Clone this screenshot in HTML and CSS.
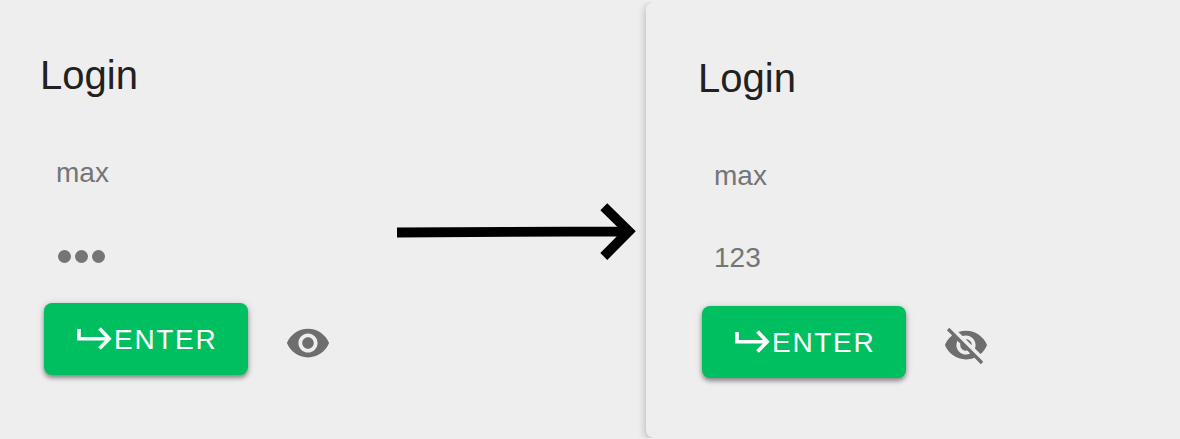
FILE: index.html
```html
<!DOCTYPE html>
<html lang="en">
<head>
<meta charset="utf-8">
<title>Login</title>
<link rel="stylesheet" href="styles.css">
</head>
<body>
<main class="stage">
  <section class="panel">
    <h1 class="title">Login</h1>
    <div class="field">max</div>
    <div class="field password"><i class="dot"></i><i class="dot"></i><i class="dot"></i></div>
    <div class="actions">
      <button class="enter" type="button">
        <svg class="enter-icon" viewBox="0 0 36 24" width="36" height="24"><path d="M2 2v9.700H32M22.500 1.500l9.700 10.200-9.700 9.800"/></svg><span class="label">ENTER</span>
      </button>
      <svg class="eye" viewBox="0 0 24 24"><path d="M12 4.500C7 4.500 2.730 7.610 1 12c1.730 4.390 6 7.500 11 7.500s9.270-3.110 11-7.500c-1.730-4.390-6-7.500-11-7.500zM12 17c-2.760 0-5-2.240-5-5s2.240-5 5-5 5 2.240 5 5-2.240 5-5 5zm0-8c-1.660 0-3 1.340-3 3s1.340 3 3 3 3-1.340 3-3-1.340-3-3-3z"/></svg>
    </div>
  </section>
  <svg class="arrow" viewBox="0 0 240 60" width="240" height="60"><path d="M0 30.500L232 29.300M206.800 4.700L231.800 29.300L206.800 54.500"/></svg>
  <section class="panel card">
    <h1 class="title">Login</h1>
    <div class="field">max</div>
    <div class="field">123</div>
    <div class="actions">
      <button class="enter" type="button">
        <svg class="enter-icon" viewBox="0 0 36 24" width="36" height="24"><path d="M2 2v9.700H32M22.500 1.500l9.700 10.200-9.700 9.800"/></svg><span class="label">ENTER</span>
      </button>
      <svg class="eye eye-off" viewBox="0 0 24 24"><path d="M12 7c2.760 0 5 2.240 5 5 0 .65-.13 1.260-.36 1.830l2.920 2.920c1.510-1.260 2.700-2.890 3.430-4.750-1.730-4.390-6-7.500-11-7.500-1.400 0-2.740.25-3.980.7l2.160 2.160C10.740 7.130 11.350 7 12 7zM2 4.270l2.280 2.280.46.46C3.080 8.300 1.780 10.020 1 12c1.730 4.390 6 7.500 11 7.500 1.550 0 3.030-.3 4.380-.84l.42.42L19.730 22 21 20.730 3.270 3 2 4.270zM7.530 9.800l1.550 1.550c-.05.21-.08.43-.08.65 0 1.660 1.340 3 3 3 .22 0 .44-.03.65-.08l1.550 1.550c-.67.33-1.410.53-2.200.53-2.760 0-5-2.240-5-5 0-.79.2-1.530.53-2.200zm4.310-.78l3.150 3.150.02-.16c0-1.660-1.340-3-3-3l-.17.01z"/></svg>
    </div>
  </section>
</main>
</body>
</html>
```
FILE: styles.css
```css
* { box-sizing: border-box; }

body {
  margin: 0;
  background: #eee;
  font-family: "Liberation Sans", Arial, sans-serif;
}

.stage {
  display: flex;
  width: 1180px;
  height: 439px;
  overflow: hidden;
}

.panel {
  flex: none;
  width: 397px;
  padding: 52px 0 0 40px;
}

.card {
  width: 560px;
  height: 436px;
  margin: 2px 0 0 9px;
  padding: 53px 0 0 52px;
  border-radius: 8px;
  background: #eee;
  box-shadow: 0 2px 8px rgba(0, 0, 0, .28);
  clip-path: inset(0 0 0 -10px);
}

.title {
  margin: 0;
  height: 46px;
  font-size: 40px;
  font-weight: 400;
  line-height: 46px;
  color: #212121;
}

.field {
  height: 32px;
  margin-top: 59px;
  padding-left: 16px;
  font-size: 28px;
  line-height: 32px;
  color: #757575;
}

.field + .field { margin-top: 50px; }

.password {
  display: flex;
  align-items: center;
  gap: 4px;
  padding: 2px 0 0 18px;
}

.dot {
  width: 13px;
  height: 13px;
  border-radius: 50%;
  background: #757575;
}

.actions {
  display: flex;
  margin: 32px 0 0 4px;
}

.enter {
  display: flex;
  align-items: center;
  width: 204px;
  height: 72px;
  padding: 0 0 0 33px;
  border: 0;
  border-radius: 8px;
  background: #00bf60;
  box-shadow: 0 3px 4px rgba(0, 0, 0, .36), 0 1px 8px rgba(0, 0, 0, .14);
  color: #fff;
  font: 28px/32px "Liberation Sans", Arial, sans-serif;
  letter-spacing: 1.7px;
}

.label { padding-top: 1px; }

.enter-icon {
  flex: none;
  margin-right: 1px;
  fill: none;
  stroke: #fff;
  stroke-width: 3.6;
}

.eye {
  width: 46px;
  height: 46px;
  margin: 17px 0 0 37px;
  fill: #6e6e6e;
}

.eye-off { margin-top: 16px; }

.arrow {
  flex: none;
  margin-top: 202px;
  fill: none;
  stroke: #000;
  stroke-width: 9.8;
}
```
